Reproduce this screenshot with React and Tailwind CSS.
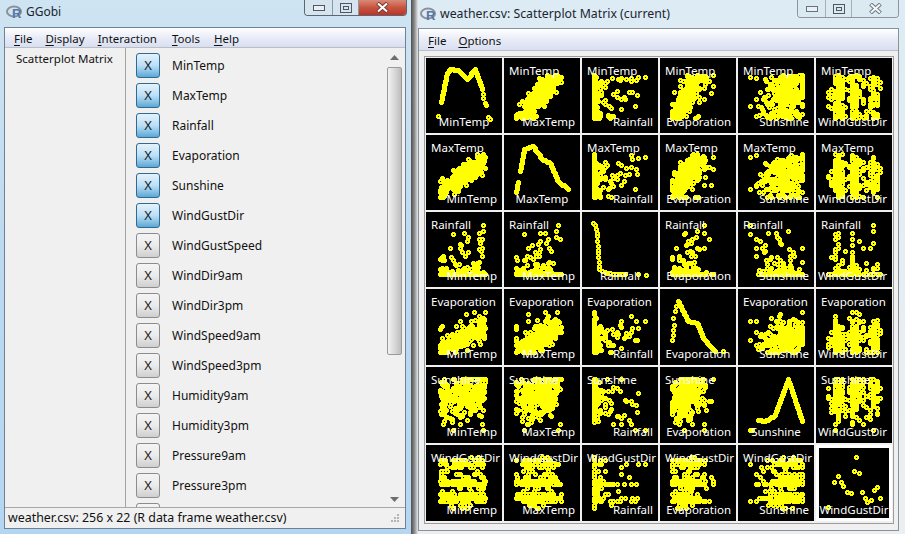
import React from "react";

const VARS = ["MinTemp", "MaxTemp", "Rainfall", "Evaporation", "Sunshine", "WindGustDir"];
const LIST = ["MinTemp","MaxTemp","Rainfall","Evaporation","Sunshine","WindGustDir","WindGustSpeed","WindDir9am","WindDir3pm","WindSpeed9am","WindSpeed3pm","Humidity9am","Humidity3pm","Pressure9am","Pressure3pm"];

function rng(a) {
  return () => {
    a |= 0; a = (a + 0x6d2b79f5) | 0;
    let t = Math.imul(a ^ (a >>> 15), 1 | a);
    t = (t + Math.imul(t ^ (t >>> 7), 61 | t)) ^ t;
    return ((t ^ (t >>> 14)) >>> 0) / 4294967296;
  };
}
const clamp = (v) => Math.max(0, Math.min(1, v));

function makeData() {
  const r = rng(20240611);
  const g = () => (r() + r() + r() + r() - 2) / 0.577;
  const weights = [1, 1, 7, 8, 6, 2, 1, 9, 9, 4, 2, 1, 3, 5, 6, 2];
  const total = weights.reduce((a, b) => a + b, 0);
  const rows = [];
  for (let i = 0; i < 256; i++) {
    const m = clamp(0.04 + 0.86 * r());
    const maxT = clamp(0.08 + 0.72 * m + g() * 0.11);
    const wet = r() < 0.38;
    const rain = wet ? clamp(Math.pow(r(), 3.6) * (0.6 + 0.5 * r()) * (0.5 + m)) : 0;
    const evap = clamp(0.04 + 0.5 * m * (0.7 + 0.6 * r()) + g() * 0.08 + (r() < 0.05 ? 0.3 : 0));
    const sun = clamp(0.64 + 0.2 * maxT + g() * 0.2 - rain * 0.5);
    let w = r() * total, lv = 0;
    for (; lv < 16; lv++) { w -= weights[lv]; if (w <= 0) break; }
    rows.push([m, maxT, rain, evap, sun, Math.min(lv, 15) / 15]);
  }
  return rows;
}
const DATA = makeData();

const dot = (x, y) => {
  const a = Math.round(x), b = Math.round(y);
  return `M${a - 1} ${b - 2}h3v1h1v3h-1v1h-3v-1h-1v-3h1zM${a} ${b}v1h1v-1z`;
};
function line(pts, step = 1.4) {
  let out = "";
  for (let i = 0; i < pts.length - 1; i++) {
    const [x0, y0] = pts[i], [x1, y1] = pts[i + 1];
    const n = Math.max(1, Math.round(Math.hypot(x1 - x0, y1 - y0) / step));
    for (let k = 0; k <= n; k++) {
      out += dot(x0 + ((x1 - x0) * k) / n, y0 + ((y1 - y0) * k) / n);
    }
  }
  return out;
}
const pts = (list) => list.map(([x, y]) => dot(x, y)).join("");

const DIAG = [
  line([[15, 44], [21, 15], [24, 11], [32, 12], [41, 21], [49, 11], [56, 31]]) + pts([[57, 36], [57, 40], [59, 45], [60, 47], [12, 58], [62, 59], [64, 61]]),
  line([[12, 57], [14, 47]]) + line([[16, 36], [20, 14], [29, 11], [38, 24], [46, 28], [54, 46], [64, 54]]),
  pts([[11, 11], [13, 13], [14, 17], [15, 21], [15, 24], [15, 29], [16, 34], [16, 38], [16, 41], [16, 45], [17, 50], [17, 54], [17, 57], [20, 59], [23, 60], [25, 61], [28, 61], [31, 62], [34, 62], [37, 62], [40, 62], [43, 62], [56, 62], [64, 63]]),
  pts([[12, 51], [13, 46], [13, 41], [14, 36], [13, 29], [15, 22], [16, 17]]) + line([[18, 12], [28, 32], [37, 34], [43, 49], [50, 57], [55, 62]]) + pts([[63, 62]]),
  line([[12, 63], [14, 63]]) + line([[20, 53], [27, 54], [37, 48], [50, 12], [64, 54]]),
  pts([[40, 12], [38, 26], [43, 28], [22, 31], [18, 37], [25, 37], [27, 41], [31, 47], [35, 48], [46, 47], [58, 45], [61, 42], [49, 53], [51, 57], [55, 55], [64, 53], [12, 62]]),
];

function cellPath(row, col, h) {
  if (row === col) return DIAG[row];
  let out = "";
  for (const d of DATA) {
    const x = 12 + 52 * d[col];
    const y = 12 + (h - 25) * (1 - d[row]);
    out += dot(x, y);
  }
  return out;
}

const LABEL = "text-[11.5px] leading-[16px] text-white whitespace-nowrap";

function Cell({ row, col }) {
  const h = row < 3 ? 75 : 76;
  const diag = row === col;
  const selected = row === 5 && col === 5;
  return (
    <div className={selected ? "relative bg-black border-[3px] border-white" : "relative overflow-hidden bg-black"}>
      <svg className={selected ? "absolute -left-[3px] -top-[3px]" : "absolute left-0 top-0"} width="76" height={h} viewBox={`0 0 76 ${h}`} shapeRendering="crispEdges">
        <path d={cellPath(row, col, h)} fill="#ffff00" />
      </svg>
      {!diag && <span className={`absolute left-[5px] top-[5px] ${LABEL}`}>{VARS[row]}</span>}
      {diag ? (
        <span className={selected ? `absolute left-[-3px] right-[-3px] bottom-[0px] text-center ${LABEL}` : `absolute left-0 right-0 bottom-[3px] text-center ${LABEL}`}>{VARS[col]}</span>
      ) : (
        <span className={`absolute right-[5px] bottom-[3px] ${LABEL}`}>{VARS[col]}</span>
      )}
    </div>
  );
}

function RLogo() {
  return (
    <svg width="18" height="16" viewBox="0 0 18 16" className="shrink-0">
      <ellipse cx="8" cy="7.5" rx="7" ry="5" fill="none" stroke="#8b8f96" strokeWidth="2" />
      <text x="6" y="14" fontSize="13" fontWeight="700" fill="#5577aa" fontFamily="Liberation Sans, sans-serif">R</text>
    </svg>
  );
}

function MinIcon({ dim }) {
  return (
    <svg width="12" height="6" viewBox="0 0 12 6">
      <rect x="0.5" y="0.5" width="11" height="5" fill="#e9eff4" stroke={dim ? "#66727c" : "#4d5862"} />
    </svg>
  );
}
function MaxIcon() {
  return (
    <svg width="12" height="10" viewBox="0 0 12 10">
      <rect x="0.5" y="0.5" width="11" height="9" fill="none" stroke="#4d5862" />
      <rect x="3.5" y="3.5" width="5" height="3" fill="none" stroke="#4d5862" />
    </svg>
  );
}
function CloseIcon({ color, glow }) {
  return (
    <svg width="13" height="11" viewBox="0 0 13 11">
      <path d="M1.5 1 L11.5 10 M11.5 1 L1.5 10" stroke={glow} strokeWidth="4" />
      <path d="M2 1.5 L11 9.5 M11 1.5 L2 9.5" stroke={color} strokeWidth="2" />
    </svg>
  );
}

function Arrow({ up }) {
  return (
    <svg width="9" height="5" viewBox="0 0 9 5">
      <path d={up ? "M4.5 0 L9 5 H0 Z" : "M0 0 H9 L4.5 5 Z"} fill="#6d6d6d" />
    </svg>
  );
}

function Menu({ items, gaps }) {
  return items.map((t, i) => (
    <span key={t} className={gaps[i]}>
      <span className="underline underline-offset-2">{t[0]}</span>
      {t.slice(1)}
    </span>
  ));
}

const BTN_ON = "w-[24px] h-[25px] shrink-0 rounded-[3px] border border-[#2f6a94] bg-gradient-to-b from-[#e4f2fb] via-[#bcdff5] to-[#5aa8d6] flex items-center justify-center text-[13px] text-[#10202c]";
const BTN_OFF = "w-[24px] h-[25px] shrink-0 rounded-[3px] border border-[#8c8c8c] bg-gradient-to-b from-[#f4f4f4] via-[#ebebeb] to-[#cfcfcf] flex items-center justify-center text-[13px] text-[#222]";

function VarRow({ name, on }) {
  return (
    <div className="flex items-center h-[25px] shrink-0 mb-[5px]">
      <div className={on ? BTN_ON : BTN_OFF}>X</div>
      <span className="ml-[12px] text-[12px] text-[#111] whitespace-nowrap">{name}</span>
    </div>
  );
}

export default function App() {
  return (
    <div className="w-[905px] h-[534px] flex overflow-hidden bg-[#dfeaf2] font-['Noto_Sans',sans-serif]">
      {/* left window */}
      <div className="w-[411px] h-[534px] shrink-0 flex flex-col bg-gradient-to-b from-[#cfe4f2] via-[#bcd9f0] to-[#b5d6f2] pl-[4px] pr-[5px]">
        <div className="h-[27px] shrink-0 flex items-start">
          <div className="flex items-center gap-[2px] pl-[2px] pt-[3px]">
            <RLogo />
            <span className="text-[12px] text-[#1a2530]">GGobi</span>
          </div>
          <div className="ml-auto mr-[-1px] flex h-[16px] rounded-b-[4px] border border-t-0 border-[#5b6670] overflow-hidden">
            <div className="w-[28px] flex items-center justify-center bg-[#d5e4ee] border-r border-[#8a98a3]"><MinIcon /></div>
            <div className="w-[26px] flex items-center justify-center bg-[#d5e4ee] border-r border-[#8a98a3]"><MaxIcon /></div>
            <div className="w-[47px] flex items-center justify-center bg-gradient-to-b from-[#d88a78] via-[#c8543f] to-[#b9332a]"><CloseIcon color="#ffffff" glow="#7d3a33" /></div>
          </div>
        </div>
        <div className="h-[502px] shrink-0 flex flex-col border border-[#6f8192] bg-[#f0f0f0] text-[#111] overflow-hidden">
          <div className="h-[20px] shrink-0 flex items-center pt-[2px] bg-gradient-to-b from-[#ffffff] via-[#e9ecf7] to-[#d9dff1] border-b border-[#b9bec8] text-[11.5px]">
            <Menu items={["File", "Display", "Interaction", "Tools", "Help"]} gaps={["ml-[9px]", "ml-[13px]", "ml-[13px]", "ml-[15px]", "ml-[14px]"]} />
          </div>
          <div className="flex-1 flex min-h-0">
            <div className="w-[121px] shrink-0 border-r border-[#a3a3a3] pl-[11px] pt-[2px] text-[11.5px] leading-[18px] text-[#111]">Scatterplot Matrix</div>
            <div className="flex-1 pl-[10px] pt-[5px] overflow-hidden flex flex-col">
              {LIST.map((n, i) => <VarRow key={n} name={n} on={i < 6} />)}
              <div className={BTN_OFF} />
            </div>
            <div className="w-[18px] shrink-0 mr-[2px] flex flex-col items-center bg-[#f0f0f0]">
              <div className="h-[19px] shrink-0 flex items-center justify-center"><Arrow up /></div>
              <div className="h-[288px] w-[15px] shrink-0 rounded-[2px] border border-[#9a9a9a] bg-gradient-to-r from-[#f2f2f2] via-[#d9d9d9] to-[#bdbdbd]" />
              <div className="flex-1" />
              <div className="h-[16px] shrink-0 flex items-center justify-center"><Arrow /></div>
            </div>
          </div>
          <div className="h-[21px] shrink-0 flex items-center border-t border-[#a8a8a8] bg-[#f0f0f0] pl-[3px] pr-[5px] text-[12.4px] text-[#111]">
            <span className="whitespace-nowrap">weather.csv: 256 x 22 (R data frame weather.csv)</span>
            <svg className="ml-auto" width="10" height="10" viewBox="0 0 10 10">
              <path d="M7 1h2v2h-2zM4 4h2v2h-2zM7 4h2v2h-2zM1 7h2v2h-2zM4 7h2v2h-2zM7 7h2v2h-2z" fill="#b5b5b5" />
            </svg>
          </div>
        </div>
      </div>

      {/* shadow gap */}
      <div className="w-[7px] shrink-0 bg-gradient-to-r from-[#4f4f4f] via-[#8e8e8e] to-[#e5e8ea]" />

      {/* right window */}
      <div className="flex-1 h-[534px] flex flex-col bg-gradient-to-b from-[#dcebf4] via-[#e6edf2] to-[#eceff1]">
        <div className="h-[28px] shrink-0 flex items-start">
          <div className="flex items-center gap-[2px] pl-[2px] pt-[5px]">
            <RLogo />
            <span className="text-[12.3px] text-[#1a2530] whitespace-nowrap">weather.csv: Scatterplot Matrix (current)</span>
          </div>
          <div className="ml-auto mr-[6px] flex h-[18px] rounded-b-[4px] border border-t-0 border-[#8b959d] overflow-hidden">
            <div className="w-[28px] flex items-center justify-center bg-[#dbe9f1] border-r border-[#a4afb7]"><MinIcon dim /></div>
            <div className="w-[26px] flex items-center justify-center bg-[#dbe9f1] border-r border-[#a4afb7]"><MaxIcon /></div>
            <div className="w-[46px] flex items-center justify-center bg-[#dbe9f1]"><CloseIcon color="#f4f7f9" glow="#6f7a83" /></div>
          </div>
        </div>
        <div className="w-[481px] h-[503px] shrink-0 flex flex-col border border-[#87929b] bg-[#f0f0f0] text-[#111]">
          <div className="h-[22px] shrink-0 flex items-center pt-[3px] bg-gradient-to-b from-[#ffffff] via-[#e9ecf7] to-[#d9dff1] border-b border-[#b9bec8] text-[11.5px]">
            <Menu items={["File", "Options"]} gaps={["ml-[9px]", "ml-[12px]"]} />
          </div>
          <div className="ml-[5px] mt-[5px] w-[470px] h-[468px] border border-[#9c9c9c] p-[1px]">
            <div className="grid grid-cols-[repeat(6,76px)] grid-rows-[75px_75px_75px_76px_76px_76px] gap-[2px]">
              {VARS.map((_, r) => VARS.map((_, c) => <Cell key={`${r}-${c}`} row={r} col={c} />))}
            </div>
          </div>
        </div>
      </div>
    </div>
  );
}
